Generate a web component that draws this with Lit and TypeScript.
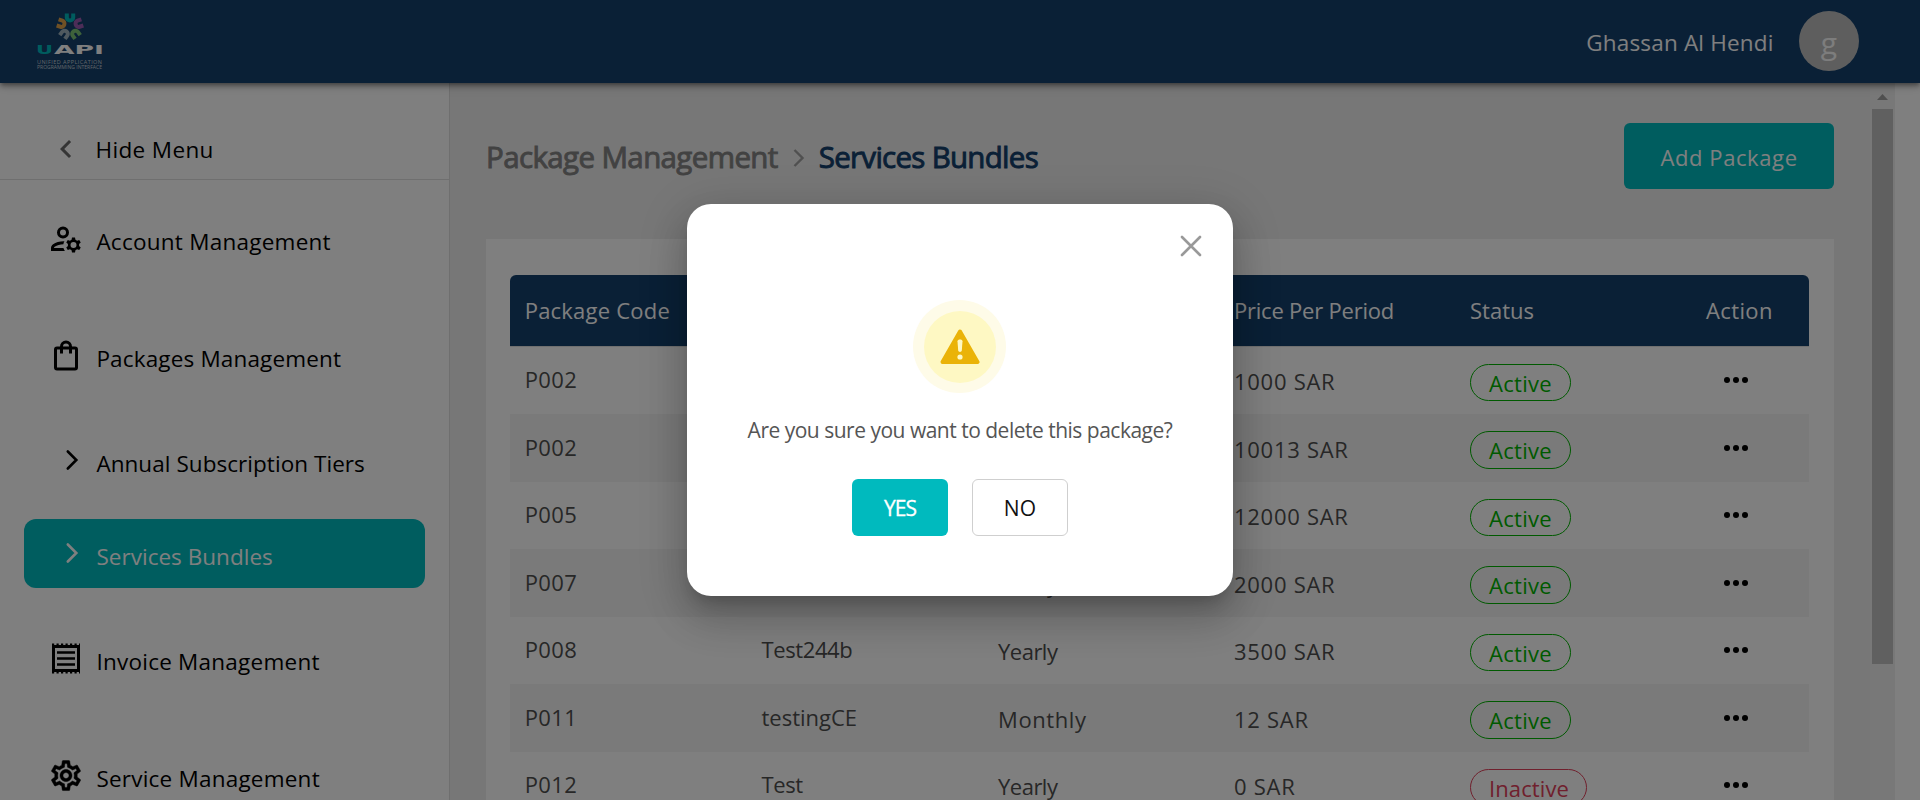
import { LitElement, html, css, svg } from "lit";
import { classMap } from "lit/directives/class-map.js";

const icons = {
  account: svg`<svg width="36" height="36" viewBox="0 0 24 24"><path fill-rule="evenodd" d="M10 3.700a4 4 0 1 0 0 8 4 4 0 0 0 0-8zm0 2a2 2 0 1 1 0 4 2 2 0 0 1 0-4zM4 18c0-.36.17-.68.44-.84C6.100 16.180 8 15.500 10.300 15.500c.1-.9.3-1.400.65-2.020C7.800 13.400 5.200 14.300 3.410 15.440 2.510 16 2 17 2 18.050V20h9.260a6.900 6.900 0 0 1-.97-2z"/><path fill-rule="evenodd" d="M20.750 16c0-.22-.03-.42-.06-.63l1.140-1.010-1-1.730-1.450.49c-.32-.27-.68-.48-1.080-.63L18 11h-2l-.3 1.490c-.4.15-.76.36-1.080.63l-1.450-.49-1 1.730 1.140 1.010c-.03.21-.06.41-.06.63s.03.42.06.63l-1.140 1.010 1 1.730 1.450-.49c.32.27.68.48 1.080.63L16 21h2l.3-1.490c.4-.15.76-.36 1.080-.63l1.450.49 1-1.730-1.140-1.010c.03-.21.06-.41.06-.63zM17 18a2 2 0 1 1 0-4 2 2 0 0 1 0 4z"/></svg>`,
  bag: svg`<svg width="36" height="36" viewBox="0 0 36 36" fill="none" stroke="#000" stroke-width="3"><rect x="7.500" y="10" width="21" height="21" rx="1.500"/><path d="M13.500 15.500v-7a4.500 4.500 0 0 1 9 0v7"/></svg>`,
  receipt: svg`<svg width="36" height="36" viewBox="0 0 36 36"><path fill="none" stroke="#000" stroke-width="3" d="M5.500 5.500h25v24h-25z"/><path fill="none" stroke="#000" stroke-width="2" stroke-dasharray="2.200 2.300" d="M4 3.500h28M4 31.500h28"/><path fill="none" stroke="#000" stroke-width="2.600" d="M9 11.500h18M9 17.500h18M9 23.500h18"/></svg>`,
  gear: svg`<svg width="36" height="36" viewBox="0 0.300 24 24"><path stroke="#000" stroke-width=".3" d="M19.430 12.980c.04-.32.07-.64.07-.98 0-.34-.03-.66-.07-.98l2.110-1.650c.19-.15.24-.42.12-.64l-2-3.460c-.09-.16-.26-.25-.44-.25-.06 0-.12.01-.17.03l-2.490 1c-.52-.4-1.080-.73-1.690-.98l-.38-2.650C14.460 2.180 14.250 2 14 2h-4c-.25 0-.46.18-.49.42l-.38 2.650c-.61.25-1.170.59-1.690.98l-2.490-1c-.06-.02-.12-.03-.18-.03-.17 0-.34.09-.43.25l-2 3.460c-.13.22-.07.49.12.64l2.110 1.650c-.04.32-.07.65-.07.98 0 .33.03.66.07.98l-2.110 1.650c-.19.15-.24.42-.12.64l2 3.460c.09.16.26.25.44.25.06 0 .12-.01.17-.03l2.490-1c.52.4 1.080.73 1.690.98l.38 2.650c.03.24.24.42.49.42h4c.25 0 .46-.18.49-.42l.38-2.650c.61-.25 1.170-.59 1.690-.98l2.490 1c.06.02.12.03.18.03.17 0 .34-.09.43-.25l2-3.460c.12-.22.07-.49-.12-.64l-2.110-1.650zm-1.980-1.710c.04.31.05.52.05.73 0 .21-.02.43-.05.73l-.14 1.130.89.7 1.080.84-.7 1.210-1.270-.51-1.040-.42-.9.68c-.43.32-.84.56-1.250.73l-1.060.43-.16 1.130-.2 1.350h-1.400l-.19-1.350-.16-1.130-1.060-.43c-.43-.18-.83-.41-1.230-.71l-.91-.7-1.060.43-1.270.51-.7-1.210 1.080-.84.89-.7-.14-1.130c-.03-.31-.05-.54-.05-.74s.02-.43.05-.73l.14-1.130-.89-.7-1.080-.84.7-1.210 1.270.51 1.040.42.9-.68c.43-.32.84-.56 1.250-.73l1.060-.43.16-1.130.2-1.350h1.390l.19 1.350.16 1.130 1.060.43c.43.18.83.41 1.230.71l.91.7 1.060-.43 1.270-.51.7 1.210-1.070.85-.89.7.14 1.130zM12 8c-2.210 0-4 1.790-4 4s1.790 4 4 4 4-1.790 4-4-1.790-4-4-4zm0 6c-1.100 0-2-.9-2-2s.9-2 2-2 2 .9 2 2-.9 2-2 2z"/></svg>`,
  chevron: svg`<svg width="36" height="36" viewBox="0 0 36 36" fill="none" stroke="currentColor" stroke-width="2.600" stroke-linecap="round"><path d="M19.800 8.500 28.300 17l-8.500 8.500"/></svg>`,
  back: svg`<svg width="36" height="36" viewBox="0 0 24 24"><path fill="#6b6b6b" d="M15.410 7.410 14 6l-6 6 6 6 1.410-1.410L10.830 12z"/></svg>`,
};

type MenuItem = { label: string; icon: keyof typeof icons; spacing: number; child?: boolean; active?: boolean };
const menu: MenuItem[] = [
  { label: "Account Management", icon: "account", spacing: 0.25 },
  { label: "Packages Management", icon: "bag", spacing: 0.16 },
  { label: "Annual Subscription Tiers", icon: "chevron", spacing: 0.05, child: true },
  { label: "Services Bundles", icon: "chevron", spacing: 0.03, child: true, active: true },
  { label: "Invoice Management", icon: "receipt", spacing: 0.24 },
  { label: "Service Management", icon: "gear", spacing: 0.22 },
];

const rows = [
  ["P002", "Test", "Yearly", "1000 SAR", "Active"],
  ["P002", "Test", "Yearly", "10013 SAR", "Active"],
  ["P005", "Test", "Yearly", "12000 SAR", "Active"],
  ["P007", "Test", "Yearly", "2000 SAR", "Active"],
  ["P008", "Test244b", "Yearly", "3500 SAR", "Active"],
  ["P011", "testingCE", "Monthly", "12 SAR", "Active"],
  ["P012", "Test", "Yearly", "0 SAR", "Inactive"],
];

const petals = ["#00b9bd", "#9a5bb0", "#7cc576", "#9fb3bf", "#e0a24a"];

class UapiHeader extends LitElement {
  static styles = css`
    :host { display: flex; align-items: center; height: 83px; background: #14406c; color: #fff; padding: 0 61px 0 36px; position: relative; z-index: 1;
      box-shadow: 0 2px 4px -1px rgba(0,0,0,.3), 0 4px 5px rgba(0,0,0,.2), 0 1px 12px rgba(0,0,0,.2); }
    svg { display: block; }
    .name { margin: 2px 25.500px 0 auto; font-size: 22.500px; letter-spacing: .17px; }
    .avatar { width: 60px; height: 60px; border-radius: 50%; background: #bdbdbd; display: grid; place-items: center; font-size: 30px; color: #fafafa; box-sizing: border-box; padding-top: 3px; margin-top: -1px; }
    .brand { font: 700 12.500px "DejaVu Sans", sans-serif; }
    .sub { font: 400 5.500px "Open Sans", sans-serif; fill: #c4cdd6; }
  `;
  render() {
    return html`
      <svg width="68" height="60" viewBox="35 12 68 60">
        <g transform="translate(69 26.500)" fill="none" stroke-width="4">
          ${petals.map((c, i) => svg`<path transform="rotate(${i * 72})" stroke=${c} d="M-3.200-13v4a3.200 3 0 0 0 6.400 0v-4"/>`)}
        </g>
        <text class="brand" y="54" x="35" textLength="17" lengthAdjust="spacingAndGlyphs" fill="#00b9bd">U</text>
        <text class="brand" y="54" x="53" textLength="50" lengthAdjust="spacingAndGlyphs" fill="#fff">API</text>
        <text class="sub" x="36" y="63.500" textLength="65">UNIFIED APPLICATION</text>
        <text class="sub" x="36" y="69" textLength="65" lengthAdjust="spacingAndGlyphs">PROGRAMMING INTERFACE</text>
      </svg>
      <span class="name">Ghassan Al Hendi</span>
      <span class="avatar">g</span>`;
  }
}
customElements.define("uapi-header", UapiHeader);

class UapiSidebar extends LitElement {
  static styles = css`
    :host { display: block; width: 450px; box-sizing: border-box; border-right: 1px solid #dedede; background: #fff; color: #000; font-size: 22.500px; flex: none; overflow: hidden; }
    svg { display: block; flex: none; }
    .hide { height: 97px; box-sizing: border-box; border-bottom: 1px solid #dedede; padding: 36px 0 0 48px; display: flex; align-items: center; letter-spacing: .36px; }
    .item { height: 117px; padding: 0 24px; display: flex; align-items: center; }
    .child { height: 93px; }
    .inner { flex: 1; height: 69px; display: flex; align-items: center; padding-left: 24px; border-radius: 12px; }
    .active .inner { background: #00babe; color: #fff; }
    .label { margin-left: 12.400px; padding-top: 6.500px; white-space: nowrap; }
    .hide .label { padding-top: 0; margin-left: 11.500px; }
  `;
  render() {
    return html`
      <div class="hide">${icons.back}<span class="label">Hide Menu</span></div>
      ${menu.map((m) => html`
        <div class=${classMap({ item: true, child: !!m.child, active: !!m.active })}>
          <div class="inner">${icons[m.icon]}<span class="label" style="letter-spacing:${m.spacing}px">${m.label}</span></div>
        </div>`)}`;
  }
}
customElements.define("uapi-sidebar", UapiSidebar);

class PackageTable extends LitElement {
  static styles = css`
    :host { display: block; font-size: 22px; color: #4f4f4f; }
    .row { display: grid; grid-template-columns: repeat(5, 236px) 1fr; height: 67.500px; align-items: center; }
    .row > * { padding-left: 16px; white-space: nowrap; }
    .row:nth-child(odd) { background: #f5f5f5; }
    .row.head { height: 71.500px; box-sizing: border-box; background: #14406c; color: #fff; border-radius: 6px 6px 0 0; border-bottom: 1px solid #e0e0e0; }
    .row > .code { letter-spacing: .37px; padding: 0 0 2px 14.700px; }
    .row > .name { letter-spacing: -.4px; padding: 0 0 2px 15.500px; }
    .name.wide { letter-spacing: 0; }
    .period { letter-spacing: -.5px; padding-top: 2px; }
    .period.monthly { letter-spacing: .6px; }
    .price { letter-spacing: .72px; padding-top: 2px; }
    .badge { display: inline-flex; align-items: center; height: 37.500px; box-sizing: border-box; border: 1.500px solid #00b400; color: #00b400; border-radius: 19px; padding: 1px 18px 0 18px; letter-spacing: .28px; margin-top: 4px; vertical-align: top; }
    .badge.inactive { border-color: #e0405a; color: #e0405a; letter-spacing: .1px; padding-right: 17px; }
    .dots { display: flex; gap: 3px; padding-left: 34px; }
    .dots i { width: 6px; height: 6px; border-radius: 50%; background: #000; }
    .row > .h1 { letter-spacing: .22px; padding-left: 14.700px; }
    .h4 { letter-spacing: -.22px; }
    .h6 { letter-spacing: .38px; }
  `;
  render() {
    return html`
      <div class="row head"><span class="h1">Package Code</span><span>Package Name</span><span>Period</span><span class="h4">Price Per Period</span><span>Status</span><span class="h6">Action</span></div>
      ${rows.map(([code, name, period, price, status]) => html`
        <div class="row">
          <span class="code">${code}</span><span class=${classMap({ name: true, wide: name === "testingCE" })}>${name}</span>
          <span class=${classMap({ period: true, monthly: period === "Monthly" })}>${period}</span>
          <span class="price">${price}</span>
          <span><span class=${classMap({ badge: true, inactive: status === "Inactive" })}>${status}</span></span>
          <span class="dots"><i></i><i></i><i></i></span>
        </div>`)}`;
  }
}
customElements.define("package-table", PackageTable);

class ConfirmDialog extends LitElement {
  static styles = css`
    :host { position: absolute; inset: 0; z-index: 2; background: rgba(0,0,0,.5); display: grid; place-items: center; }
    .box { width: 546px; height: 392px; box-sizing: border-box; border-radius: 24px; background: #fff; display: flex; flex-direction: column; align-items: center; padding-top: 31px;
      box-shadow: 0 11px 15px -7px rgba(0,0,0,.2), 0 24px 38px 3px rgba(0,0,0,.14), 0 9px 46px 8px rgba(0,0,0,.12); }
    svg { display: block; }
    .close { align-self: flex-end; margin-right: 31px; }
    .badge { margin: 43px 1px 0 0; width: 93px; height: 93px; border-radius: 50%; background: #fefbe8; display: grid; place-items: center; }
    .ring { width: 72px; height: 72px; border-radius: 50%; background: #fef8c3; display: grid; place-items: center; }
    p { margin: 21px 0 0; font-size: 21px; line-height: 32px; letter-spacing: -.5px; color: #555; white-space: nowrap; }
    .actions { display: flex; gap: 24px; margin-top: 33px; }
    .btn { width: 96px; height: 57px; box-sizing: border-box; border-radius: 6px; display: grid; place-items: center; font-size: 21px; }
    .yes { background: #00babe; color: #fff; letter-spacing: -.9px; font-weight: 500; -webkit-text-stroke: .3px; }
    .no { border: 1px solid #cfcfcf; color: #111; letter-spacing: .3px; }
  `;
  render() {
    return html`
      <div class="box">
        <svg class="close" width="22" height="22" viewBox="0 0 22 22" fill="none" stroke="#999" stroke-width="2.600" stroke-linecap="round"><path d="M2 2l18 18M20 2 2 20"/></svg>
        <div class="badge"><div class="ring">
          <svg width="40" height="36" viewBox="0 0 40 36"><path fill="#eab308" stroke="#eab308" stroke-width="4" stroke-linejoin="round" d="M20 2.500 37.500 33H2.500z"/><path fill="#fef8c3" d="M17.500 12.200c-.1-2.300 5.100-2.300 5 0l-.7 9.400c-.2 1.700-3.400 1.700-3.600 0z"/><circle cx="20" cy="28" r="2.600" fill="#fef8c3"/></svg>
        </div></div>
        <p>Are you sure you want to delete this package?</p>
        <div class="actions"><span class="btn yes">YES</span><span class="btn no">NO</span></div>
      </div>`;
  }
}
customElements.define("confirm-dialog", ConfirmDialog);

class AppRoot extends LitElement {
  static styles = css`
    :host { display: flex; flex-direction: column; height: 800px; overflow: hidden; position: relative; font-family: "Open Sans", "Noto Sans", sans-serif; background: #fff; }
    .body { flex: 1; min-height: 0; display: flex; }
    main { flex: 1; min-width: 0; background: #eee; padding: 40px 36px 0; overflow: hidden; }
    .top { display: flex; align-items: center; height: 66px; font-size: 29.500px; font-weight: 500; }
    .crumb { color: #858585; letter-spacing: -.62px; -webkit-text-stroke: .9px; }
    .crumb.here { color: #14406c; letter-spacing: -.72px; }
    .top svg { margin: 4px 14px 0 15px; }
    .add { margin-left: auto; width: 210px; height: 66px; box-sizing: border-box; border-radius: 6px; background: #00babe; color: #fff; font-size: 22px; font-weight: 400; letter-spacing: .6px; display: grid; place-items: center; padding-top: 1px; }
    .card { margin-top: 50px; background: #fff; padding: 36px 25px 0 24px; height: 700px; }
    .track { width: 25px; background: #f1f1f1; display: flex; flex-direction: column; align-items: center; }
    .track svg { margin: 11px 0 9px; }
    .thumb { width: 21px; height: 555px; background: #c1c1c1; }
    .gutter { width: 25px; background: #fff; }
  `;
  render() {
    return html`
      <uapi-header></uapi-header>
      <div class="body">
        <uapi-sidebar></uapi-sidebar>
        <main>
          <div class="top">
            <span class="crumb">Package Management</span>
            <svg width="12" height="18" viewBox="0 0 12 18" fill="none" stroke="#a0a0a0" stroke-width="2.400"><path d="M1.500 1 9.500 9l-8 8"/></svg>
            <span class="crumb here">Services Bundles</span>
            <span class="add">Add Package</span>
          </div>
          <div class="card"><package-table></package-table></div>
        </main>
        <div class="track"><svg width="11" height="6" viewBox="0 0 11 6"><path fill="#a0a0a0" d="M0 6 5.500 0 11 6z"/></svg><div class="thumb"></div></div>
        <div class="gutter"></div>
      </div>
      <confirm-dialog></confirm-dialog>`;
  }
}
customElements.define("app-root", AppRoot);
